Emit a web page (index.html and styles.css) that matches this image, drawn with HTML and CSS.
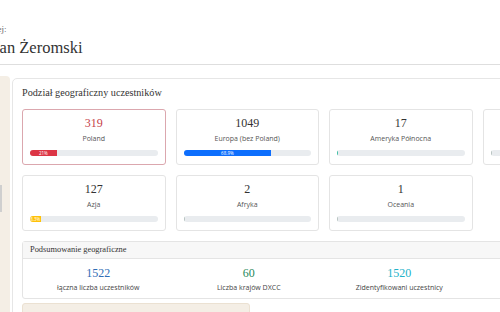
FILE: index.html
```html
<!DOCTYPE html>
<html lang="pl">
<head>
  <meta charset="UTF-8">
  <meta name="viewport" content="width=device-width, initial-scale=1">
  <title>Podział geograficzny uczestników</title>
  <link rel="stylesheet" href="styles.css">
</head>
<body>
  <div class="page-header">
    <div class="header-label">Patron edycji jubileuszowej:</div>
    <div class="header-name">Stefan Żeromski</div>
  </div>

  <div class="layout">
    <div class="sidebar">
      <div class="side-mark"></div>
    </div>

    <div class="main-card">
      <h3 class="card-title">Podział geograficzny uczestników</h3>

      <div class="region-grid">
        <div class="region-card region-home">
          <div class="region-count count-home">319</div>
          <div class="region-name">Poland</div>
          <div class="progress"><div class="progress-fill fill-red" style="width:21%">21%</div></div>
        </div>
        <div class="region-card">
          <div class="region-count">1049</div>
          <div class="region-name">Europa (bez Poland)</div>
          <div class="progress"><div class="progress-fill fill-blue" style="width:68.9%">68.9%</div></div>
        </div>
        <div class="region-card">
          <div class="region-count">17</div>
          <div class="region-name">Ameryka Północna</div>
          <div class="progress"><div class="progress-fill fill-teal" style="width:1.1%"></div></div>
        </div>
        <div class="region-card">
          <div class="region-count">7</div>
          <div class="region-name">Ameryka Południowa</div>
          <div class="progress"><div class="progress-fill fill-grey" style="width:0.5%"></div></div>
        </div>
        <div class="region-card">
          <div class="region-count">127</div>
          <div class="region-name">Azja</div>
          <div class="progress"><div class="progress-fill fill-yellow" style="width:8.3%">8.3%</div></div>
        </div>
        <div class="region-card">
          <div class="region-count">2</div>
          <div class="region-name">Afryka</div>
          <div class="progress"><div class="progress-fill fill-grey" style="width:0.1%"></div></div>
        </div>
        <div class="region-card">
          <div class="region-count">1</div>
          <div class="region-name">Oceania</div>
          <div class="progress"><div class="progress-fill fill-grey" style="width:0.1%"></div></div>
        </div>
      </div>

      <div class="summary">
        <div class="summary-header">Podsumowanie geograficzne</div>
        <div class="summary-body">
          <div class="stat">
            <div class="stat-value text-blue">1522</div>
            <div class="stat-label">łączna liczba uczestników</div>
          </div>
          <div class="stat">
            <div class="stat-value text-green">60</div>
            <div class="stat-label">Liczba krajów DXCC</div>
          </div>
          <div class="stat">
            <div class="stat-value text-cyan">1520</div>
            <div class="stat-label">Zidentyfikowani uczestnicy</div>
          </div>
          <div class="stat">
            <div class="stat-value text-grey">2</div>
            <div class="stat-label">Nieznana lokalizacja</div>
          </div>
        </div>
      </div>

      <div class="note-box"></div>
    </div>
  </div>
</body>
</html>
```

FILE: styles.css
```css
html {
  overflow: hidden;
}
body {
  margin: 0;
  background-color: #ffffff;
  font-family: "Liberation Serif", serif;
  color: #333;
}
.page-header {
  padding-top: 23px;
  padding-bottom: 6px;
  border-bottom: 1px solid #dedede;
  width: 900px;
}
.header-label {
  margin-left: -96px;
  font-size: 9px;
  line-height: 12px;
  color: #666;
  white-space: nowrap;
}
.header-name {
  margin-left: -27px;
  margin-top: 3px;
  font-size: 16.5px;
  line-height: 20px;
  color: #333;
  white-space: nowrap;
}
.layout {
  display: flex;
  align-items: flex-start;
  margin-top: 11px;
}
.sidebar {
  flex: 0 0 10px;
  height: 260px;
  background-color: #f4eee5;
  border-radius: 0 4px 0 0;
  display: flex;
  flex-direction: column;
}
.side-mark {
  margin-top: 109px;
  width: 2px;
  height: 27px;
  background-color: #cfcfcf;
}
.main-card {
  flex: 0 0 auto;
  width: 604px;
  margin-left: 2px;
  margin-top: 2px;
  padding: 7px 9px 9px;
  background-color: #ffffff;
  border: 1px solid #e6e6e6;
  border-radius: 5px;
}
.card-title {
  margin: 0;
  font-size: 10.2px;
  font-weight: normal;
  line-height: 14px;
  color: #333;
}
.region-grid {
  display: grid;
  grid-template-columns: repeat(4, 1fr);
  gap: 10px;
  margin-top: 9px;
}
.region-card {
  padding: 5px 7px 8px;
  border: 1px solid #e4e4e4;
  border-radius: 3px;
  text-align: center;
  background-color: #ffffff;
}
.region-home {
  border-color: #dba7ae;
}
.region-count {
  font-size: 12px;
  line-height: 16px;
  color: #333;
}
.count-home {
  color: #c63e49;
}
.region-name {
  margin-top: 2px;
  font-family: "Open Sans", sans-serif;
  font-size: 7px;
  line-height: 11px;
  color: #555;
  white-space: nowrap;
}
.progress {
  margin-top: 6px;
  height: 6px;
  background-color: #e9ecef;
  border-radius: 3px;
  overflow: hidden;
  display: flex;
}
.progress-fill {
  font-family: "Open Sans", sans-serif;
  font-size: 4.5px;
  line-height: 6px;
  color: #ffffff;
  text-align: center;
  overflow: hidden;
  white-space: nowrap;
}
.fill-red {
  background-color: #dc3545;
}
.fill-blue {
  background-color: #0d6efd;
}
.fill-yellow {
  background-color: #ffc107;
}
.fill-teal {
  background-color: #3fbfa5;
}
.fill-grey {
  background-color: #b8c4c2;
}
.summary {
  margin-top: 10px;
  border: 1px solid #e4e4e4;
  border-radius: 3px;
}
.summary-header {
  padding: 0 7px;
  height: 16px;
  line-height: 16px;
  font-size: 8.4px;
  color: #333;
  background-color: #f7f7f7;
  border-bottom: 1px solid #e4e4e4;
}
.summary-body {
  display: grid;
  grid-template-columns: repeat(4, 1fr);
  padding: 6px 0 5px;
}
.stat {
  text-align: center;
}
.stat-value {
  font-size: 12px;
  line-height: 16px;
}
.stat-label {
  margin-top: 2px;
  font-family: "Open Sans", sans-serif;
  font-size: 7px;
  line-height: 10px;
  color: #444;
}
.text-blue {
  color: #2f6db5;
}
.text-green {
  color: #1f8a5b;
}
.text-cyan {
  color: #22b2c9;
}
.text-grey {
  color: #6c757d;
}
.note-box {
  margin-top: 4px;
  width: 226px;
  height: 40px;
  background-color: #f4eee5;
  border: 1px solid #ebe1d2;
  border-radius: 3px;
}
```
